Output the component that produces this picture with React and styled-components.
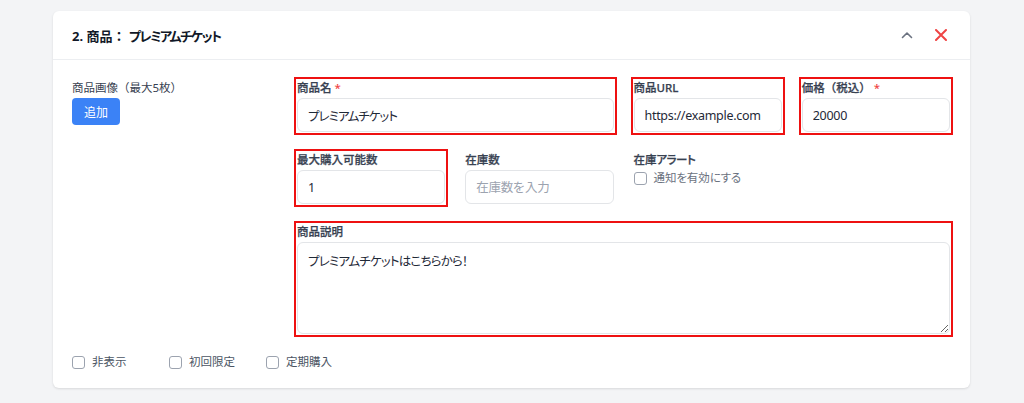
import React from 'react'
import styled, { createGlobalStyle } from 'styled-components'

const GlobalStyle = createGlobalStyle`
  html, body {
    margin: 0;
    padding: 0;
    background: #f3f4f6;
    font-family: "Noto Sans", "Noto Sans CJK JP", sans-serif;
    color: #1f2937;
  }
  * { box-sizing: border-box; }
`

const Page = styled.div`
  padding: 11px 54px 14px 53px;
`

const Card = styled.section`
  background: #fff;
  border-radius: 6px;
  box-shadow: 0 1px 3px rgba(0, 0, 0, 0.08), 0 1px 2px rgba(0, 0, 0, 0.04);
`

const Header = styled.header`
  height: 49px;
  display: flex;
  align-items: center;
  justify-content: space-between;
  padding: 0 22px 0 19px;
  border-bottom: 1px solid #eceef1;
`

const Title = styled.h2`
  margin: 0;
  font-size: 13px;
  font-weight: 700;
  color: #111827;
  font-family: "Noto Sans", "Noto Sans CJK JP", sans-serif;
`

/* katakana / hiragana runs are set tighter, like the narrow kana of the original */
const Kana = styled.span`
  font-feature-settings: "palt" 1;
  letter-spacing: ${p => p.$tight || -1}px;
`

const Actions = styled.div`
  display: flex;
  align-items: center;
  gap: 20px;
`

const IconButton = styled.button`
  border: none;
  background: none;
  padding: 0;
  display: flex;
  align-items: center;
  justify-content: center;
  width: 14px;
  height: 14px;
  cursor: pointer;
`

const Body = styled.div`
  display: grid;
  grid-template-columns: 204px 1fr;
  column-gap: 20px;
  padding: 20px 20px 0 19px;
`

const Side = styled.div`
  display: flex;
  flex-direction: column;
  align-items: flex-start;
  gap: 2px;
`

const SideLabel = styled.div`
  font-size: 11.5px;
  line-height: 16px;
  color: #374151;
`

const AddButton = styled.button`
  width: 48px;
  height: 27px;
  border: none;
  border-radius: 4px;
  background: #3b82f6;
  color: #fff;
  font-size: 12px;
  font-family: "Noto Sans CJK JP", sans-serif;
  cursor: pointer;
`

const Grid = styled.div`
  display: grid;
  grid-template-columns: repeat(4, 1fr);
  column-gap: 20px;
  row-gap: 20px;
  padding-left: 1px;
`

const Field = styled.div`
  display: flex;
  flex-direction: column;
  gap: 2px;
  grid-column: span ${p => p.$span || 1};
  outline: ${p => (p.$marked ? '2px solid #ee1111' : 'none')};
  outline-offset: 1px;
`

const Label = styled.label`
  font-size: 11.5px;
  line-height: 16px;
  font-weight: 500;
  color: #374151;
  -webkit-text-stroke: 0.25px #374151;
`

const Required = styled.span`
  color: #ef4444;
  margin-left: 3px;
  -webkit-text-stroke: 0;
`

const Input = styled.input`
  height: 34px;
  width: 100%;
  border: 1px solid #e3e5e8;
  border-radius: 6px;
  padding: 0 10px;
  font-size: 12.5px;
  font-family: "Noto Sans", "Noto Sans CJK JP", sans-serif;
  font-feature-settings: ${p => (p.$kana ? '"palt" 1' : 'normal')};
  letter-spacing: ${p => (p.$kana ? '-1px' : '-0.3px')};
  color: #1f2937;
  background: #fff;
  outline: none;
  &::placeholder {
    color: #9ca3af;
  }
`

const TextArea = styled.textarea`
  height: 92px;
  width: 100%;
  border: 1px solid #e3e5e8;
  border-radius: 6px;
  padding: 9px 10px;
  font-size: 12.5px;
  line-height: 20px;
  font-family: "Noto Sans", "Noto Sans CJK JP", sans-serif;
  font-feature-settings: "palt" 1;
  letter-spacing: -0.8px;
  color: #1f2937;
  background: #fff;
  outline: none;
  resize: vertical;
  display: block;
`

const CheckRow = styled.label`
  display: flex;
  align-items: center;
  gap: 7px;
  font-size: 11.5px;
  line-height: 16px;
  color: ${p => (p.$muted ? '#6b7280' : '#4b5563')};
  cursor: pointer;
`

const Box = styled.input.attrs({ type: 'checkbox' })`
  appearance: none;
  margin: 0;
  width: 13px;
  height: 13px;
  border: 1.5px solid #9ca3af;
  border-radius: 3px;
  background: #fff;
  flex-shrink: 0;
`

const Footer = styled.div`
  display: grid;
  grid-template-columns: repeat(3, 97px);
  padding: 20px 19px 18px 19px;
`

const ChevronUp = () => (
  <svg width="12" height="8" viewBox="0 0 12 8" fill="none">
    <path d="M1.5 6.5 L6 2 L10.5 6.5" stroke="#6b7280" strokeWidth="1.6" strokeLinecap="round" strokeLinejoin="round" />
  </svg>
)

const CloseIcon = () => (
  <svg width="12" height="12" viewBox="0 0 12 12" fill="none">
    <path d="M1 1 L11 11 M11 1 L1 11" stroke="#ef4444" strokeWidth="2" strokeLinecap="round" />
  </svg>
)

const flags = ['非表示', '初回限定', '定期購入']

export default function App() {
  return (
    <>
      <GlobalStyle />
      <Page>
        <Card>
          <Header>
            <Title>2. 商品： <Kana $tight={-1.5}>プレミアムチケット</Kana></Title>
            <Actions>
              <IconButton aria-label="折りたたむ"><ChevronUp /></IconButton>
              <IconButton aria-label="削除"><CloseIcon /></IconButton>
            </Actions>
          </Header>
          <Body>
            <Side>
              <SideLabel>商品画像（最大5枚）</SideLabel>
              <AddButton>追加</AddButton>
            </Side>
            <Grid>
              <Field $span={2} $marked>
                <Label>商品名<Required>*</Required></Label>
                <Input $kana defaultValue="プレミアムチケット" />
              </Field>
              <Field $marked>
                <Label>商品URL</Label>
                <Input defaultValue="https://example.com" />
              </Field>
              <Field $marked>
                <Label>価格（税込）<Required>*</Required></Label>
                <Input defaultValue="20000" />
              </Field>
              <Field $marked>
                <Label>最大購入可能数</Label>
                <Input defaultValue="1" />
              </Field>
              <Field>
                <Label>在庫数</Label>
                <Input placeholder="在庫数を入力" />
              </Field>
              <Field>
                <Label>在庫<Kana $tight={-0.5}>アラート</Kana></Label>
                <CheckRow $muted>
                  <Box />
                  <span>通知<Kana $tight={-0.3}>を</Kana>有効<Kana $tight={-0.3}>にする</Kana></span>
                </CheckRow>
              </Field>
              <div />
              <Field $span={4} $marked>
                <Label>商品説明</Label>
                <TextArea defaultValue="プレミアムチケットはこちらから！" />
              </Field>
            </Grid>
          </Body>
          <Footer>
            {flags.map(f => (
              <CheckRow key={f}>
                <Box />
                {f}
              </CheckRow>
            ))}
          </Footer>
        </Card>
      </Page>
    </>
  )
}
